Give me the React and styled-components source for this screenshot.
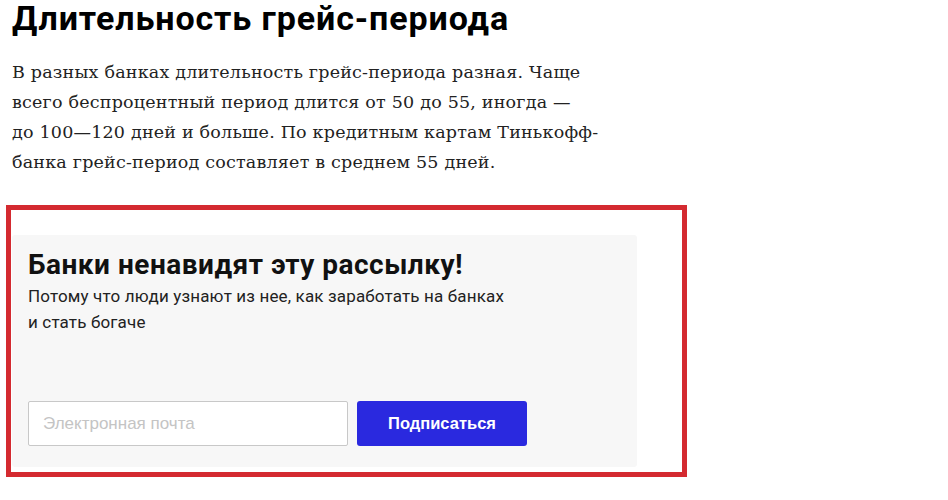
import styled, { createGlobalStyle } from "styled-components";

const Global = createGlobalStyle`
  html, body {
    margin: 0;
    background: #fff;
  }
  body {
    font-family: Roboto, "Noto Sans", sans-serif;
    color: #111;
  }
`;

const Article = styled.article`
  padding: 0 0 0 12px;
  width: 680px;
`;

const Title = styled.h2`
  margin: 0;
  font-family: Roboto, "Liberation Sans", sans-serif;
  font-weight: 700;
  font-size: 34px;
  line-height: 36px;
  letter-spacing: 0.9px;
  color: #000;
`;

const Text = styled.p`
  margin: 21px 0 0;
  font-family: "DejaVu Serif", "Liberation Serif", serif;
  font-size: 17.5px;
  line-height: 30px;
  letter-spacing: 0.2px;
  color: #222;
  white-space: nowrap;
`;

const Frame = styled.div`
  margin: 28px 0 0 -6px;
  width: 670px;
  height: 237px;
  border: 5px solid #d42a30;
  padding: 25px 0 0 1px;
`;

const Card = styled.section`
  display: flex;
  flex-direction: column;
  width: 625px;
  height: 232px;
  box-sizing: border-box;
  padding: 13px 16px 21px;
  background: #f7f7f7;
  border-radius: 3px;
`;

const CardTitle = styled.h3`
  margin: 0;
  font-family: Roboto, sans-serif;
  font-weight: 700;
  font-size: 28px;
  line-height: 34px;
  letter-spacing: 0.5px;
  color: #111;
`;

const CardText = styled.p`
  margin: 1px 0 0;
  font-family: Roboto, sans-serif;
  font-weight: 400;
  font-size: 17px;
  line-height: 26px;
  letter-spacing: 0.15px;
  color: #222;
`;

const Form = styled.form`
  display: flex;
  gap: 9px;
  margin-top: auto;
`;

const Email = styled.input`
  width: 320px;
  height: 45px;
  box-sizing: border-box;
  padding: 0 14px;
  border: 1px solid #c8c8c8;
  border-radius: 2px;
  background: #fff;
  font-family: "Liberation Sans", Arial, sans-serif;
  font-size: 17px;
  outline: none;

  &::placeholder {
    color: #c4c4c4;
  }
`;

const Submit = styled.button`
  width: 170px;
  height: 45px;
  border: 0;
  border-radius: 3px;
  background: #2a29df;
  color: #fff;
  font-family: "Liberation Sans", Arial, sans-serif;
  font-weight: 700;
  font-size: 16.5px;
  cursor: pointer;
`;

const App = () => (
  <>
    <Global />
    <Article>
      <Title>Длительность грейс-периода</Title>
      <Text>
        В разных банках длительность грейс-периода разная. Чаще
        <br />
        всего беспроцентный период длится от 50 до 55, иногда —
        <br />
        до 100—120 дней и больше. По кредитным картам Тинькофф-
        <br />
        банка грейс-период составляет в среднем 55 дней.
      </Text>
      <Frame>
        <Card>
          <CardTitle>Банки ненавидят эту рассылку!</CardTitle>
          <CardText>
            Потому что люди узнают из нее, как заработать на банках
            <br />и стать богаче
          </CardText>
          <Form onSubmit={(e) => e.preventDefault()}>
            <Email type="email" placeholder="Электронная почта" />
            <Submit type="submit">Подписаться</Submit>
          </Form>
        </Card>
      </Frame>
    </Article>
  </>
);

export default App;
